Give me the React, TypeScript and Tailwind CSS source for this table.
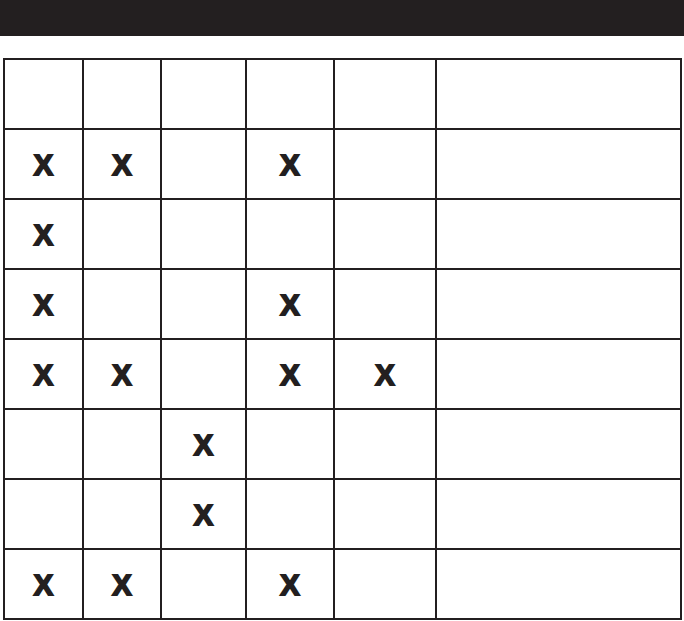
import React from 'react';

const widths = ['w-[79px]', 'w-[78px]', 'w-[85px]', 'w-[88px]', 'w-[102px]', 'w-[245px]'];

// 1 = marked with an X
const rows: number[][] = [
  [1, 1, 0, 1, 0, 0],
  [1, 0, 0, 0, 0, 0],
  [1, 0, 0, 1, 0, 0],
  [1, 1, 0, 1, 1, 0],
  [0, 0, 1, 0, 0, 0],
  [0, 0, 1, 0, 0, 0],
  [1, 1, 0, 1, 0, 0],
];

const Mark: React.FC = () => (
  <span className="text-[29px] leading-none font-bold text-[#231f20] [-webkit-text-stroke:1.8px_#231f20] font-['Liberation_Sans',Arial,sans-serif]">
    X
  </span>
);

const App: React.FC = () => {
  return (
    <div className="w-[684px] h-[621px] bg-white overflow-hidden font-['Liberation_Sans',Arial,sans-serif]">
      <div className="h-[36px] bg-[#231f20]" />
      <table className="mt-[22px] ml-[3px] table-fixed border-collapse">
        <colgroup>
          {widths.map((w, i) => (
            <col key={i} className={w} />
          ))}
        </colgroup>
        <tbody>
          <tr>
            {widths.map((_, i) => (
              <td key={i} className="h-[70px] border-2 border-[#231f20] p-0" />
            ))}
          </tr>
          {rows.map((row, r) => (
            <tr key={r}>
              {row.map((v, c) => (
                <td key={c} className="h-[70px] border-2 border-[#231f20] p-0 pt-[5px] text-center align-middle">
                  {v ? <Mark /> : null}
                </td>
              ))}
            </tr>
          ))}
        </tbody>
      </table>
    </div>
  );
};

export default App;
